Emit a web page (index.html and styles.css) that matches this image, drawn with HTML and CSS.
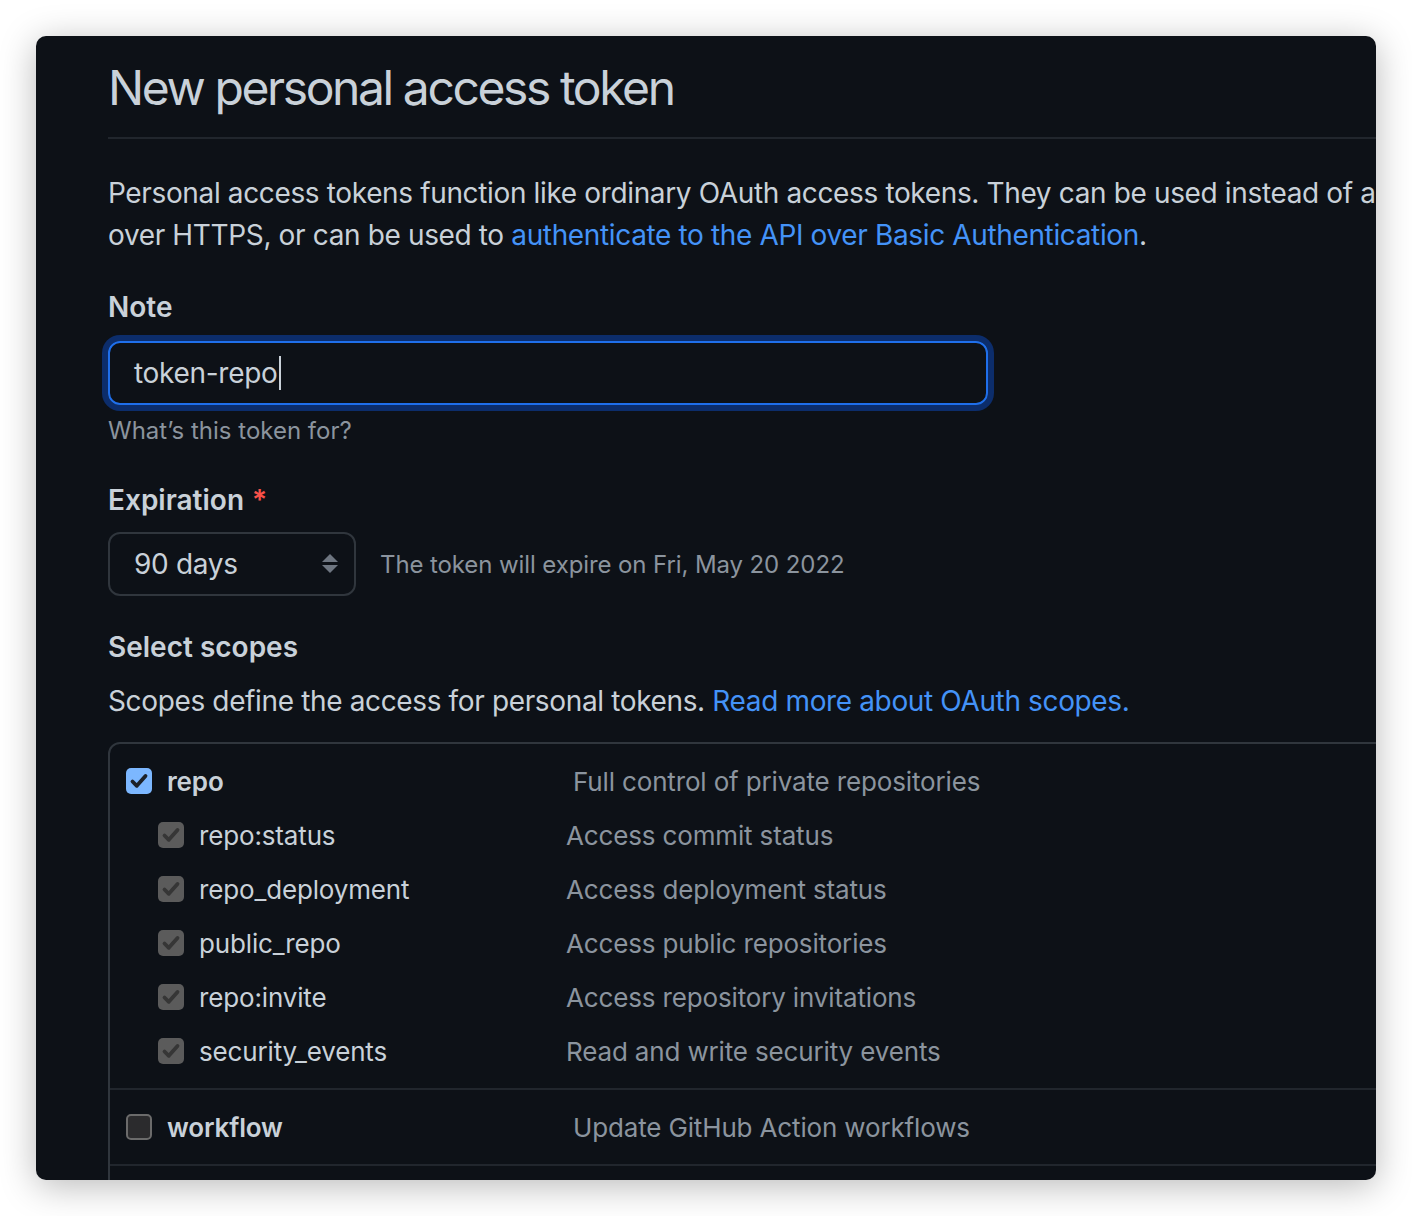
FILE: index.html
```html
<!DOCTYPE html>
<html lang="en">
<head>
<meta charset="utf-8">
<title>New personal access token</title>
<link rel="stylesheet" href="styles.css">
</head>
<body>
<div class="window">
  <div class="content">
    <h1 class="title">New personal access token</h1>
    <p class="intro">Personal access tokens function like ordinary OAuth access tokens. They can be used instead of a password for Git over HTTPS, or can be used to <a href="#">authenticate to the API over Basic Authentication</a>.</p>

    <div class="group group-note">
      <label class="label">Note</label>
      <div class="input"><span class="input-text">token-repo</span><span class="caret"></span></div>
      <p class="hint">What’s this token for?</p>
    </div>

    <div class="group group-exp">
      <label class="label">Expiration <span class="req">*</span></label>
      <div class="exp-row">
        <div class="select"><span>90 days</span>
          <svg class="arrows" width="16" height="20" viewBox="0 0 16 20"><path d="M8 0 L16 8 H0 Z M0 11 H16 L8 19 Z" fill="#6e7681"/></svg>
        </div>
        <span class="exp-note">The token will expire on Fri, May 20 2022</span>
      </div>
    </div>

    <div class="group group-scopes">
      <h3 class="label">Select scopes</h3>
      <p class="scopes-desc">Scopes define the access for personal tokens. <a href="#">Read more about OAuth scopes.</a></p>
      <div class="scopes">
        <div class="scope-group">
          <div class="row parent">
            <div class="name"><span class="cb cb-on"><svg viewBox="0 0 26 26"><path d="M6.5 13.5 L10.8 17.8 L19.5 8" fill="none" stroke="#1c2128" stroke-width="3.8" stroke-linecap="round" stroke-linejoin="round"/></svg></span><b>repo</b></div>
            <div class="desc">Full control of private repositories</div>
          </div>
          <div class="row child">
            <div class="name"><span class="cb cb-dis"><svg viewBox="0 0 26 26"><path d="M6.5 13.5 L10.8 17.8 L19.5 8" fill="none" stroke="#363636" stroke-width="3.8" stroke-linecap="round" stroke-linejoin="round"/></svg></span>repo:status</div>
            <div class="desc">Access commit status</div>
          </div>
          <div class="row child">
            <div class="name"><span class="cb cb-dis"><svg viewBox="0 0 26 26"><path d="M6.5 13.5 L10.8 17.8 L19.5 8" fill="none" stroke="#363636" stroke-width="3.8" stroke-linecap="round" stroke-linejoin="round"/></svg></span>repo_deployment</div>
            <div class="desc">Access deployment status</div>
          </div>
          <div class="row child">
            <div class="name"><span class="cb cb-dis"><svg viewBox="0 0 26 26"><path d="M6.5 13.5 L10.8 17.8 L19.5 8" fill="none" stroke="#363636" stroke-width="3.8" stroke-linecap="round" stroke-linejoin="round"/></svg></span>public_repo</div>
            <div class="desc">Access public repositories</div>
          </div>
          <div class="row child">
            <div class="name"><span class="cb cb-dis"><svg viewBox="0 0 26 26"><path d="M6.5 13.5 L10.8 17.8 L19.5 8" fill="none" stroke="#363636" stroke-width="3.8" stroke-linecap="round" stroke-linejoin="round"/></svg></span>repo:invite</div>
            <div class="desc">Access repository invitations</div>
          </div>
          <div class="row child">
            <div class="name"><span class="cb cb-dis"><svg viewBox="0 0 26 26"><path d="M6.5 13.5 L10.8 17.8 L19.5 8" fill="none" stroke="#363636" stroke-width="3.8" stroke-linecap="round" stroke-linejoin="round"/></svg></span>security_events</div>
            <div class="desc">Read and write security events</div>
          </div>
        </div>
        <div class="scope-group">
          <div class="row parent">
            <div class="name"><span class="cb cb-off"></span><b>workflow</b></div>
            <div class="desc">Update GitHub Action workflows</div>
          </div>
        </div>
        <div class="scope-group scope-more"></div>
      </div>
    </div>
  </div>
</div>
</body>
</html>
```
FILE: styles.css
```css
html, body {
  margin: 0;
  padding: 0;
  background: #ffffff;
}

body {
  font-family: Inter, "Noto Sans", "Liberation Sans", sans-serif;
  color: #c9d1d9;
}

.window {
  margin: 36px;
  width: 1340px;
  height: 1144px;
  overflow: hidden;
  border-radius: 10px;
  background: #0d1117;
  box-shadow: 0 6px 36px rgba(0, 0, 0, 0.28);
}

.content {
  width: 1520px;
  padding: 16px 0 0 72px;
}

a {
  color: #4493f8;
  text-decoration: none;
}

.title {
  margin: 0;
  font-size: 48px;
  line-height: 72px;
  font-weight: 400;
  letter-spacing: -2.4px;
  padding-bottom: 13px;
  border-bottom: 2px solid #21262d;
}

.intro {
  margin: 33px 0 0;
  font-size: 28px;
  line-height: 42px;
  letter-spacing: -0.36px;
}

.group {
  margin-top: 30px;
}

.label {
  display: block;
  margin: 0;
  font-size: 28px;
  line-height: 42px;
  font-weight: 600;
}

.req {
  color: #f85149;
  margin-left: 1px;
}

.input {
  margin-top: 13px;
  box-sizing: border-box;
  width: 880px;
  height: 64px;
  border: 2px solid #1f6feb;
  border-radius: 12px;
  box-shadow: 0 0 0 6px #0c2d6b;
  padding: 0 24px;
  display: flex;
  align-items: center;
  font-size: 28px;
  letter-spacing: -0.3px;
}

.caret {
  display: inline-block;
  width: 2px;
  height: 34px;
  background: #c9d1d9;
  margin-left: 1px;
}

.hint {
  margin: 8px 0 0;
  font-size: 24px;
  line-height: 36px;
  color: #8b949e;
}

.exp-row {
  margin-top: 11px;
  display: flex;
  align-items: center;
  gap: 24px;
}

.select {
  box-sizing: border-box;
  width: 248px;
  height: 64px;
  border: 2px solid #30363d;
  border-radius: 12px;
  padding: 0 16px 0 24px;
  display: flex;
  align-items: center;
  justify-content: space-between;
  font-size: 28px;
  letter-spacing: -0.3px;
}

.exp-note {
  font-size: 24px;
  color: #8b949e;
  letter-spacing: -0.1px;
}

.scopes-desc {
  margin: 12px 0 0;
  font-size: 28px;
  line-height: 42px;
  letter-spacing: -0.36px;
}

.scopes {
  margin-top: 20px;
  border: 2px solid #30363d;
  border-radius: 12px;
}

.scope-group {
  padding: 10px 0;
}

.scope-group + .scope-group {
  border-top: 2px solid #21262d;
}

.scope-more {
  height: 54px;
}

.row {
  display: flex;
  align-items: center;
  height: 54px;
  font-size: 26px;
  letter-spacing: -0.15px;
}

.row .name {
  display: flex;
  align-items: center;
  gap: 15px;
}

.row.parent .name {
  padding-left: 16px;
  width: 447px;
}

.row.child .name {
  padding-left: 48px;
  width: 408px;
}

.row b {
  font-weight: 600;
}

.desc {
  color: #8b949e;
}

.cb {
  box-sizing: border-box;
  width: 26px;
  height: 26px;
  border-radius: 5px;
  flex: none;
  display: block;
}

.cb svg {
  display: block;
  width: 26px;
  height: 26px;
}

.cb-on {
  background: #7cb7ff;
}

.cb-dis {
  background: #5b5b5b;
}

.cb-off {
  background: #2b2b2d;
  border: 2px solid #6b6b6b;
}
```
